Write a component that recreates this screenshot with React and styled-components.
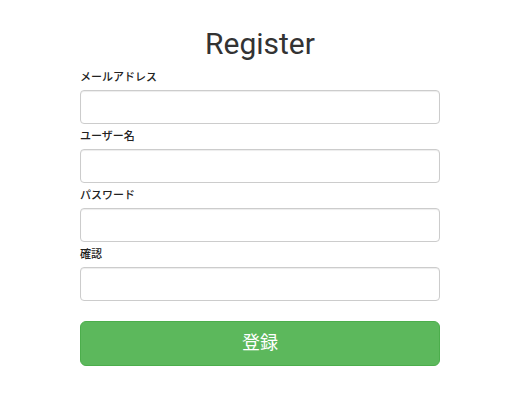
import React from "react";
import styled, { createGlobalStyle } from "styled-components";

const Global = createGlobalStyle`
  html, body { margin: 0; padding: 0; background: #fff; }
  body { font-family: Roboto, "Noto Sans CJK JP", sans-serif; color: #333; }
  * { box-sizing: border-box; }
`;

const Page = styled.div`
  width: 513px;
  height: 417px;
  padding: 27px 0 0 80px;
`;

const Form = styled.form`
  width: 360px;
  display: flex;
  flex-direction: column;
`;

const Title = styled.h2`
  margin: 0 0 8px;
  text-align: center;
  font-family: Roboto, sans-serif;
  font-weight: 400;
  font-size: 30px;
  line-height: 33px;
  color: #333;
`;

const Group = styled.div`
  display: flex;
  flex-direction: column;
  margin-bottom: 3px;
`;

const Label = styled.label`
  font-family: "Noto Sans CJK JP", sans-serif;
  font-size: 11px;
  font-weight: 500;
  line-height: 17px;
  color: #222;
  margin-bottom: 5px;
`;

const Input = styled.input`
  display: block;
  width: 100%;
  height: 34px;
  padding: 6px 12px;
  font-size: 14px;
  border: 1px solid #ccc;
  border-radius: 4px;
  background: #fff;
  box-shadow: inset 0 1px 1px rgba(0, 0, 0, 0.075);
  outline: none;
`;

const Button = styled.button`
  margin-top: 17px;
  width: 100%;
  height: 45px;
  padding: 0 0 5px;
  background: #5cb85c;
  border: 1px solid #4cae4c;
  border-radius: 6px;
  color: #fff;
  font-family: "Noto Sans CJK JP", sans-serif;
  font-size: 18px;
  cursor: pointer;
`;

const fields = [
  { label: "メールアドレス", type: "email" },
  { label: "ユーザー名", type: "text" },
  { label: "パスワード", type: "password" },
  { label: "確認", type: "password" },
];

export default function App() {
  return (
    <>
      <Global />
      <Page>
        <Form onSubmit={(e) => e.preventDefault()}>
          <Title>Register</Title>
          {fields.map((f) => (
            <Group key={f.label}>
              <Label>{f.label}</Label>
              <Input type={f.type} />
            </Group>
          ))}
          <Button type="submit">登録</Button>
        </Form>
      </Page>
    </>
  );
}
